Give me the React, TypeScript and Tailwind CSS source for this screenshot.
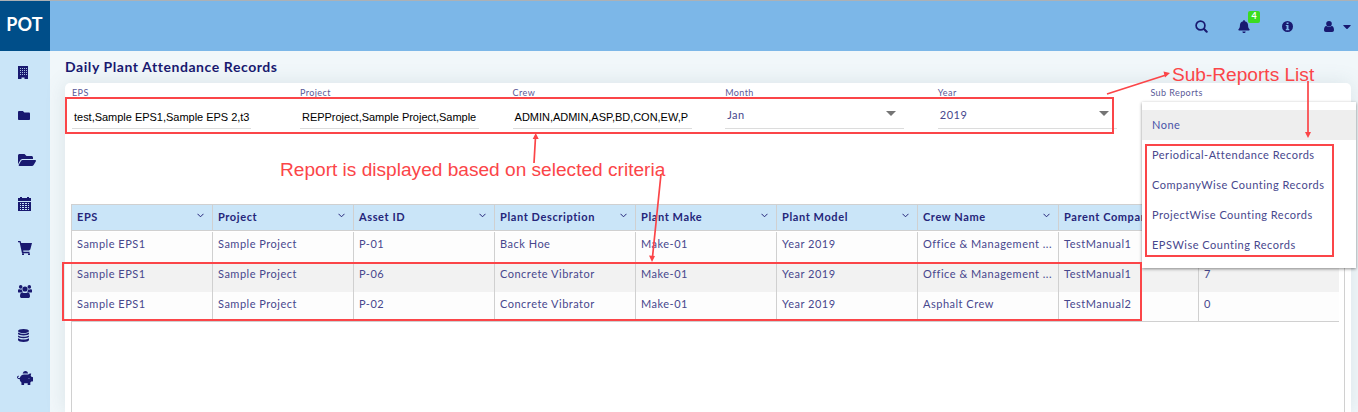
import React from "react";
import { FaFolder, FaFolderOpen, FaBell, FaCaretDown, FaPiggyBank } from "react-icons/fa";

const INK = "#191970";

function Building() {
  return (
    <svg width="10" height="13" viewBox="0 0 10 13">
      <path fill={INK} d="M0 0h10v13H6.500v-1.500h-3V13H0z" />
      <path stroke="#a9c0e0" strokeWidth="1" strokeDasharray="1 1" d="M2 2.500h7M2 4.500h7M2 6.500h7M2 8.500h7" />
    </svg>
  );
}

function Calendar() {
  return (
    <svg width="13" height="14" viewBox="0 0 13 14" fill={INK}>
      <path fillRule="evenodd" d="M2 0h2v1h5V0h2v1h2v3H0V1h2zM0 5h13v9H0zM2 6v1h1V6zm2 0v1h2V6zm3 0v1h2V6zm3 0v1h1V6zM2 8v1h1V8zm2 0v1h2V8zm3 0v1h2V8zm3 0v1h1V8zM2 10v1h1v-1zm2 0v1h2v-1zm3 0v1h2v-1zm3 0v1h1v-1zM2 12v1h1v-1zm2 0v1h2v-1zm3 0v1h2v-1zm3 0v1h1v-1z" />
    </svg>
  );
}

function Cart() {
  return (
    <svg width="14" height="14" viewBox="0 0 14 14" fill={INK}>
      <path d="M0 0h2.500l.7 2H14l-1.700 6.500-1.300 1H5.200l.2 1.300h6.100v1.400H4L1.600 1.200H0z" />
      <rect x="4" y="12.300" width="2" height="1.700" rx=".6" />
      <rect x="10" y="12.300" width="2" height="1.700" rx=".6" />
    </svg>
  );
}

function Group() {
  return (
    <svg width="14" height="13" viewBox="0 0 14 13" fill={INK}>
      <circle cx="2.700" cy="1.900" r="1.800" />
      <circle cx="11.300" cy="1.900" r="1.800" />
      <circle cx="7" cy="4" r="2.600" />
      <path d="M0 7V5.300C0 4.300.8 4 1.500 4.200c.8.400 1.500.4 2.200.1.100 1 .4 1.800 1 2.400C3.800 6.700 3 7 2.600 7.500H1C.4 7.500 0 7.400 0 7zM14 7V5.300c0-1-.8-1.300-1.500-1.100-.8.400-1.500.4-2.200.1-.1 1-.4 1.800-1 2.400.9 0 1.700.3 2.100.8H13c.6 0 1-.1 1-.5zM2 11.200C2 9 2.700 7.200 4.300 7.200c1.600 1.200 3.800 1.200 5.400 0C11.300 7.200 12 9 12 11.200c0 1.100-.7 1.800-1.800 1.800H3.800C2.700 13 2 12.300 2 11.200z" />
    </svg>
  );
}

function Database() {
  return (
    <svg width="11" height="13" viewBox="0 0 11 13" fill={INK}>
      <ellipse cx="5.500" cy="2" rx="5.500" ry="2" />
      <path d="M0 3.500c2.500 1.700 8.500 1.700 11 0v1.200c0 2.300-11 2.300-11 0zM0 6.400c2.500 1.700 8.500 1.700 11 0v1.200c0 2.300-11 2.300-11 0zM0 9.300c2.500 1.700 8.500 1.700 11 0v1.700c0 2.600-11 2.600-11 0z" />
    </svg>
  );
}

function SearchIcon() {
  return (
    <svg width="13" height="13" viewBox="0 0 13 13" fill="none" stroke={INK}>
      <circle cx="5.500" cy="5.500" r="4.400" strokeWidth="1.700" />
      <path d="M9 9l2.700 2.700" strokeWidth="2.100" strokeLinecap="round" />
    </svg>
  );
}

function InfoIcon() {
  return (
    <svg width="11" height="11" viewBox="0 0 11 11" fill={INK}>
      <path fillRule="evenodd" d="M5.500 0a5.500 5.500 0 1 1 0 11 5.500 5.500 0 0 1 0-11zM4.600 1.500v1.600h1.900V1.500zM3.800 4v1.100h.8v3h-.8v1.100h3.500V8.100h-.8V4z" />
    </svg>
  );
}

function UserIcon() {
  return (
    <svg width="10" height="11" viewBox="0 0 10 11" fill={INK}>
      <circle cx="5" cy="2.800" r="2.800" />
      <path d="M0 9C0 6.800.7 5 2.400 5c1.500 1.300 3.700 1.300 5.200 0C9.300 5 10 6.800 10 9c0 1.200-.8 2-1.800 2H1.800C.8 11 0 10.200 0 9z" />
    </svg>
  );
}

const navIcons: React.ReactNode[] = [
  <Building />,
  <FaFolder className="mb-[2px] h-[13px] w-[12px]" />,
  <FaFolderOpen className="mb-[1px] h-[16px] w-[18px]" />,
  <Calendar />,
  <Cart />,
  <Group />,
  <Database />,
  <FaPiggyBank className="mb-[2px] -ml-px h-[16px] w-[16px]" />,
];

function Field({ label, value, select }: { label: string; value: string; select?: boolean }) {
  return (
    <div className="w-[212.600px] shrink-0">
      <div className="h-[16px] text-[9px] leading-[16px] tracking-[0.42px] text-[#5a5a98]">{label}</div>
      <div className="flex h-[28px] w-[179px] items-center justify-between border-b border-[#dcdcdc]">
        {select ? (
          <>
            <span className="pt-[2px] pl-[2px] text-[11px] tracking-[0.5px] text-[#47478d]">{value}</span>
            <span className="mr-[8px] mb-[3px] border-x-[5px] border-t-[5px] border-x-transparent border-t-[#757575]" />
          </>
        ) : (
          <span className="pl-[2px] pt-[5px] font-['Liberation_Sans',sans-serif] text-[11px] tracking-[-0.02px] whitespace-nowrap text-black">
            {value}
          </span>
        )}
      </div>
    </div>
  );
}

const columns = ["EPS", "Project", "Asset ID", "Plant Description", "Plant Make", "Plant Model", "Crew Name", "Parent Company", ""];
const rows = [
  ["Sample EPS1", "Sample Project", "P-01", "Back Hoe", "Make-01", "Year 2019", "Office & Management ...", "TestManual1", ""],
  ["Sample EPS1", "Sample Project", "P-06", "Concrete Vibrator", "Make-01", "Year 2019", "Office & Management ...", "TestManual1", "7"],
  ["Sample EPS1", "Sample Project", "P-02", "Concrete Vibrator", "Make-01", "Year 2019", "Asphalt Crew", "TestManual2", "0"],
];
const grid = "grid grid-cols-[141px_141px_141px_141px_141px_141px_141px_140px_140px]";

function Table() {
  return (
    <div className="mx-[6px] h-[208px] border border-b-0 border-[#d0d0d0]">
      <div className={grid + " h-[26px] w-[1267px] border-b border-[#d0d0d0] bg-[#cae5f8]"}>
        {columns.map((c, i) => (
          <div key={i} className="flex items-center justify-between border-r border-[#d0d0d0] pl-[5px] pr-[8px] text-[11px] font-bold tracking-[0.6px] whitespace-nowrap text-[#25257a]">
            <span>{c}</span>
            {i < 7 && (
              <svg width="7" height="5" viewBox="0 0 7 5" className="mb-[4px]" fill="none" stroke="#25257a">
                <path d="M.5.800L3.500 3.800 6.500.8" />
              </svg>
            )}
          </div>
        ))}
      </div>
      <div className="w-[1267px] border-b border-[#d0d0d0] pt-px">
        {rows.map((r, i) => (
          <div key={i} className={grid + (i === 1 ? " h-[30px] bg-[#f2f2f2]" : i === 0 ? " h-[30px] bg-[#fdfdfd]" : " h-[29px] bg-[#fdfdfd]")}>
            {r.map((v, j) => (
              <div key={j} className={"pl-[5px] pt-[3px] text-[11px] leading-[17px] tracking-[0.5px] whitespace-nowrap text-[#47478d] " + (j < 8 ? "border-r border-[#d0d0d0]" : "")}>
                {v}
              </div>
            ))}
          </div>
        ))}
      </div>
    </div>
  );
}

const reports = ["None", "Periodical-Attendance Records", "CompanyWise Counting Records", "ProjectWise Counting Records", "EPSWise Counting Records"];

function SubReportsMenu() {
  return (
    <div className="absolute left-[1142px] top-[102px] h-[166px] w-[214px] bg-white pt-[8px] text-[11px] leading-[30px] tracking-[0.5px] text-[#47478d] shadow-[0_1px_3px_rgba(0,0,0,0.45)]">
      {reports.map((r, i) => (
        <div key={r} className={"h-[30px] pl-[10px] " + (i === 0 ? "bg-[#eeeeee] text-[#4853a8]" : "")}>
          {r}
        </div>
      ))}
    </div>
  );
}

function Annotations() {
  return (
    <>
      <div className="absolute left-[65px] top-[97px] h-[37px] w-[1049px] border-2 border-[#fb4548]" />
      <div className="absolute left-[62px] top-[262px] h-[59px] w-[1080px] border-2 border-[#fb4548]" />
      <div className="absolute left-[1145px] top-[144px] h-[113px] w-[189px] border-2 border-[#fb4548]" />
      <div className="absolute left-[280px] top-[159px] font-['Liberation_Sans',sans-serif] text-[19.100px] leading-[21px] whitespace-nowrap text-[#fb4548]">
        Report is displayed based on selected criteria
      </div>
      <div className="absolute left-[1172px] top-[64px] font-['Liberation_Sans',sans-serif] text-[19.100px] leading-[21px] whitespace-nowrap text-[#fb4548]">
        Sub-Reports List
      </div>
      <svg className="absolute left-0 top-0" width="1358" height="412" fill="#fb4548" stroke="#fb4548">
        <path strokeWidth="1.700" d="M1107 94L1166 75M534 163L535.500 137M661 174L652.500 257M1308 81V134" />
        <path stroke="none" d="M1170 73l-6.500-1.500 1.500 6zM535.700 133l-3 6h6zM652 262l-3-6.500 6 .6zM1308 138l-3-6h6z" />
      </svg>
    </>
  );
}

export default function App() {
  return (
    <div className="relative flex h-[412px] w-[1358px] flex-col overflow-hidden border-t border-[#adb1b5] bg-[#f1f7fa] font-[Lato,sans-serif] text-[#191970]">
      <header className="flex h-[50px] shrink-0 bg-[#7cb7e8]">
        <div className="w-[50px] bg-[#004e89] pr-px text-center text-[18px] leading-[47px] font-bold tracking-[0.2px] text-white">POT</div>
        <div className="flex flex-1 items-center justify-end">
          <div className="mr-[30px]"><SearchIcon /></div>
          <div className="relative mr-[32px]">
            <FaBell className="h-[13px] w-[12px]" />
            <span className="absolute -top-[9px] left-[10px] h-[12px] w-[12px] rounded-[2px] bg-[#3bdc20] text-center text-[9px] leading-[10px] font-bold text-white">4</span>
          </div>
          <div className="mr-[31px]"><InfoIcon /></div>
          <div className="mr-[9px]"><UserIcon /></div>
          <FaCaretDown className="mr-[7px] h-[13px] w-[8px]" />
        </div>
      </header>
      <div className="flex min-h-0 flex-1">
        <nav className="flex w-[50px] shrink-0 flex-col bg-[#cae5f8]">
          {navIcons.map((icon, i) => (
            <div key={i} className="flex h-[43.800px] shrink-0 items-center pl-[18px]">{icon}</div>
          ))}
        </nav>
        <main className="flex w-[1308px] flex-col pl-[15px] pr-[7px]">
          <h1 className="h-[32px] shrink-0 text-[14px] leading-[31px] font-bold tracking-[0.57px]">Daily Plant Attendance Records</h1>
          <section className="h-[329px] shrink-0 rounded-t-[5px] bg-white shadow-[0_0_20px_rgba(90,120,130,0.15)]">
            <div className="flex h-[121px] pl-[7px] pt-[2px]">
              <div className="w-[228px] shrink-0"><Field label="EPS" value="test,Sample EPS1,Sample EPS 2,t3" /></div>
              <Field label="Project" value="REPProject,Sample Project,Sample" />
              <Field label="Crew" value="ADMIN,ADMIN,ASP,BD,CON,EW,P" />
              <Field label="Month" value="Jan" select />
              <Field label="Year" value="2019" select />
              <div className="text-[9px] leading-[16px] tracking-[0.42px] text-[#5a5a98]">Sub Reports</div>
            </div>
            <Table />
          </section>
        </main>
      </div>
      <div className="absolute -top-px left-0 h-[412px] w-[1358px]">
        <SubReportsMenu />
        <Annotations />
      </div>
    </div>
  );
}
